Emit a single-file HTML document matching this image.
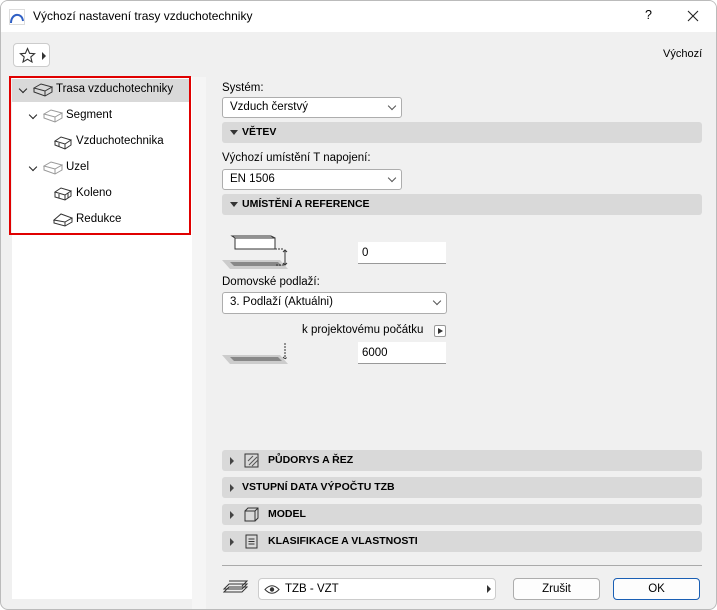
<!DOCTYPE html>
<html><head><meta charset="utf-8"><style>
*{box-sizing:border-box}
body{margin:0;width:717px;height:610px;overflow:hidden;font-family:"Liberation Sans","DejaVu Sans",sans-serif;font-size:11.5px;color:#000;background:#fff}
.win{position:absolute;left:0;top:0;width:717px;height:610px;border:1px solid #bbb;border-radius:8px;background:#f0f0f0;overflow:hidden}
.title{position:absolute;left:0;top:0;width:717px;height:31px;background:#fff}
.abs{position:absolute}
.hdr{position:absolute;left:221px;width:480px;height:21px;background:#d9d9d9;border-radius:3px;font-weight:bold;font-size:10.5px;line-height:21px}
.tri{position:absolute;left:8px;top:0}
.sel{position:absolute;background:#fff;border:1px solid #adadad;border-radius:3px;height:21px;line-height:19px;padding-left:7px}
.inp{position:absolute;background:#fff;border-bottom:1px solid #999;height:22px;line-height:22px;padding-left:4px}
.chev{position:absolute;right:6px;top:5px;width:6px;height:6px;border-right:1px solid #555;border-bottom:1px solid #555;transform:rotate(45deg)}
.tree div{position:absolute;font-size:11.5px}
.tc{position:absolute;width:6px;height:6px;border-right:1.5px solid #222;border-bottom:1.5px solid #222;transform:rotate(45deg)}
.btn{position:absolute;top:577px;height:22px;width:87px;background:#fdfdfd;border:1px solid #adadad;border-radius:4px;text-align:center;line-height:20px}
</style></head><body><div class="win">
<div class="title">
<svg class="abs" style="left:8px;top:8px" width="16" height="16"><path d="M2 14 C2 4 13 3 14 12" fill="none" stroke="#2f5fc4" stroke-width="2"/><rect x="0.5" y="0.5" width="15" height="15" fill="none" stroke="#ddd"/></svg>
<div class="abs" style="left:32px;top:8px;font-size:12px">Výchozí nastavení trasy vzduchotechniky</div>
<div class="abs" style="left:644px;top:7px;font-size:12.5px">?</div>
<svg class="abs" style="left:686px;top:9px" width="12" height="12"><path d="M1 1L11 11M11 1L1 11" stroke="#222" stroke-width="1.1"/></svg>
</div>
<div class="abs" style="left:12px;top:42px;width:37px;height:24px;background:#fff;border:1px solid #ccc;border-radius:4px">
<svg class="abs" style="left:5px;top:3px" width="17" height="17"><path d="M8.5 1.5L10.6 6.3 15.6 6.7 11.8 10 13 15 8.5 12.3 4 15 5.2 10 1.4 6.7 6.4 6.3Z" fill="none" stroke="#333" stroke-width="1.1"/></svg>
<div class="abs" style="left:28px;top:8px;border-left:4px solid #333;border-top:4px solid transparent;border-bottom:4px solid transparent"></div>
</div>
<div class="abs" style="left:662px;top:47px;font-size:11px">Výchozí</div>
<div class="abs" style="left:11px;top:76px;width:180px;height:522px;background:#fff"></div>
<div class="abs" style="left:191px;top:76px;width:14px;height:534px;background:#f5f5f5"></div>
<div class="abs" style="left:11px;top:78px;width:178px;height:23px;background:#d9d9d9"></div>
<div class="abs" style="left:8px;top:75px;width:182px;height:159px;border:2px solid #e00000"></div>
<span class="tc" style="left:19px;top:85px"></span>
<span class="tc" style="left:29px;top:111px"></span>
<span class="tc" style="left:29px;top:163px"></span>
<div class="tree">
<div style="left:55px;top:82px">Trasa vzduchotechniky</div>
<div style="left:65px;top:108px">Segment</div>
<div style="left:75px;top:134px">Vzduchotechnika</div>
<div style="left:65px;top:160px">Uzel</div>
<div style="left:75px;top:186px">Koleno</div>
<div style="left:75px;top:212px">Redukce</div>
</div>
<svg class="abs" style="left:32px;top:82px" width="20" height="14"><path d="M1 5L8 1 19 4 12 8ZM1 5V9L12 13 19 9V4M12 8V13" fill="none" stroke="#333"/></svg>
<svg class="abs" style="left:42px;top:108px" width="20" height="14"><path d="M1 5L8 1 19 4 12 8ZM1 5V9L12 13 19 9V4M12 8V13" fill="none" stroke="#999"/></svg>
<svg class="abs" style="left:53px;top:135px" width="18" height="14"><path d="M1 5L7 1 17 4 11 8ZM1 5V9L11 13 17 9V4M11 8V13M5 7V11" fill="none" stroke="#333"/></svg>
<svg class="abs" style="left:42px;top:160px" width="20" height="14"><path d="M1 5L8 1 19 4 12 8ZM1 5V9L12 13 19 9V4M12 8V13" fill="none" stroke="#999"/></svg>
<svg class="abs" style="left:53px;top:186px" width="18" height="14"><path d="M1 5L7 1 17 4 11 8ZM1 5V10L11 13 17 9V4M11 8V13M5 7V11M14 6V11" fill="none" stroke="#333"/></svg>
<svg class="abs" style="left:52px;top:212px" width="20" height="14"><path d="M1 7L8 1 19 5 12 9ZM1 7V10L12 13 19 9V5M12 9V13" fill="none" stroke="#333"/></svg>

<div class="abs" style="left:221px;top:81px">Systém:</div>
<div class="sel" style="left:221px;top:96px;width:180px">Vzduch čerstvý<div class="chev"></div></div>
<div class="hdr" style="top:121px"><span class="tri" style="top:8px;border-top:5px solid #333;border-left:4px solid transparent;border-right:4px solid transparent"></span><span style="margin-left:20px">VĚTEV</span></div>
<div class="abs" style="left:221px;top:151px">Výchozí umístění T napojení:</div>
<div class="sel" style="left:221px;top:168px;width:180px">EN 1506<div class="chev"></div></div>
<div class="hdr" style="top:193px"><span class="tri" style="top:8px;border-top:5px solid #333;border-left:4px solid transparent;border-right:4px solid transparent"></span><span style="margin-left:20px">UMÍSTĚNÍ A REFERENCE</span></div>
<svg class="abs" style="left:221px;top:234px" width="70" height="36"><path d="M0 25H58L66 34H8Z" fill="#ccc"/><path d="M8 27H56L60 31H12Z" fill="#888"/><rect x="13" y="3" width="40" height="11" fill="#fff" stroke="#333"/><path d="M13 3L10 1H49L53 3" fill="none" stroke="#333"/><path d="M53 14H62M62 30H54" stroke="#333" stroke-dasharray="2 1"/><path d="M63 15V30M61 17L63 15 65 17M61 28L63 30 65 28" fill="none" stroke="#333"/></svg>
<div class="inp" style="left:357px;top:241px;width:88px">0</div>
<div class="abs" style="left:221px;top:275px">Domovské podlaží:</div>
<div class="sel" style="left:221px;top:291px;width:225px;height:22px">3. Podlaží (Aktuálni)<div class="chev"></div></div>
<div class="abs" style="left:301px;top:323px">k projektovému počátku</div>
<div class="abs" style="left:433px;top:324px;width:12px;height:12px;border:1px solid #999;border-radius:2px;background:#fff"><span class="abs" style="left:3px;top:2px;border-left:5px solid #333;border-top:3px solid transparent;border-bottom:3px solid transparent"></span></div>
<svg class="abs" style="left:221px;top:340px" width="70" height="26"><path d="M0 14H58L66 23H8Z" fill="#ccc"/><path d="M8 16H56L60 20H12Z" fill="#888"/><path d="M63 2V18M61 16L63 18 65 16" fill="none" stroke="#333" stroke-dasharray="2 1"/></svg>
<div class="inp" style="left:357px;top:341px;width:88px">6000</div>

<div class="hdr" style="top:449px"><span class="tri" style="top:7px;border-left:4px solid #444;border-top:4px solid transparent;border-bottom:4px solid transparent"></span><svg class="abs" style="left:22px;top:3px" width="16" height="15"><rect x="1" y="1" width="13" height="13" fill="none" stroke="#333"/><path d="M5 12L13 4M8 13L14 7M4 8L9 3" stroke="#555"/></svg><span style="margin-left:46px">PŮDORYS A ŘEZ</span></div>
<div class="hdr" style="top:476px"><span class="tri" style="top:7px;border-left:4px solid #444;border-top:4px solid transparent;border-bottom:4px solid transparent"></span><span style="margin-left:20px">VSTUPNÍ DATA VÝPOČTU TZB</span></div>
<div class="hdr" style="top:503px"><span class="tri" style="top:7px;border-left:4px solid #444;border-top:4px solid transparent;border-bottom:4px solid transparent"></span><svg class="abs" style="left:22px;top:3px" width="16" height="15"><path d="M1 4H11V14H1ZM1 4L4 1H14V11L11 14M11 4L14 1" fill="none" stroke="#333"/></svg><span style="margin-left:46px">MODEL</span></div>
<div class="hdr" style="top:530px"><span class="tri" style="top:7px;border-left:4px solid #444;border-top:4px solid transparent;border-bottom:4px solid transparent"></span><svg class="abs" style="left:23px;top:3px" width="14" height="15"><rect x="1" y="1" width="11" height="13" fill="none" stroke="#333"/><path d="M3.5 5H9.5M3.5 7.5H9.5M3.5 10H9.5" stroke="#333"/></svg><span style="margin-left:46px">KLASIFIKACE A VLASTNOSTI</span></div>
<div class="abs" style="left:221px;top:564px;width:480px;height:1px;background:#aaa"></div>
<svg class="abs" style="left:222px;top:578px" width="26" height="18"><path d="M1 13H19L24 8H6ZM1 10H19L24 5H6Z M6 2H24L19 7" fill="#f0f0f0" stroke="#333"/></svg>
<div class="abs" style="left:257px;top:577px;width:238px;height:22px;background:#fff;border:1px solid #ccc;border-radius:4px">
<svg class="abs" style="left:5px;top:5px" width="16" height="11"><path d="M1 5.5Q8 -2 15 5.5Q8 13 1 5.5Z" fill="none" stroke="#333"/><circle cx="8" cy="5.5" r="2.2" fill="#333"/></svg>
<span class="abs" style="left:26px;top:4px">TZB - VZT</span>
<span class="abs" style="left:228px;top:6px;border-left:4px solid #333;border-top:4px solid transparent;border-bottom:4px solid transparent"></span></div>
<div class="btn" style="left:512px">Zrušit</div>
<div class="btn" style="left:612px;border:1px solid #1a5fb4">OK</div>
</div></body></html>
